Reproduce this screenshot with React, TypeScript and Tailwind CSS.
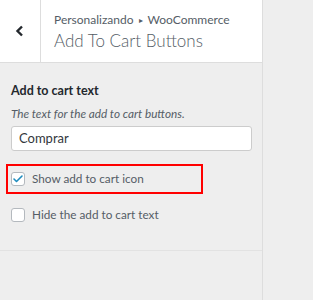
import { Check } from 'lucide-react';

export default function App() {
  return (
    <div className="flex w-[313px] h-[300px] bg-[#eeeeee] font-['Lato',sans-serif] text-[#555d66] overflow-hidden">
      <div className="w-[263px] shrink-0 flex flex-col border-r border-[#dddddd]">
        <div className="flex h-[63px] bg-white border-b border-[#dddddd]">
          <button className="w-[41px] shrink-0 flex items-center justify-center border-r border-[#dddddd] text-[#23282d]">
            <svg width="10" height="12" viewBox="0 0 10 12">
              <path d="M7 1.5 L2.5 6 L7 10.5" fill="none" stroke="currentColor" strokeWidth="2.4" />
            </svg>
          </button>
          <div className="flex flex-col justify-center pl-[13px] pt-[4px]">
            <div className="text-[12px] leading-[16px] text-[#555d66]">
              Personalizando <span className="text-[8px] align-[1px] mx-[2px]">▸</span> WooCommerce
            </div>
            <div className="text-[17px] leading-[26px] font-light text-[#555d66]">Add To Cart Buttons</div>
          </div>
        </div>

        <div className="flex flex-col px-[11px] pt-[19px] border-b border-[#e2e2e2] h-[188px]">
          <div className="text-[12.5px] font-bold text-[#23282d] leading-[18px]">Add to cart text</div>
          <div className="text-[11.75px] italic text-[#555d66] leading-[18px] mt-[5px]">The text for the add to cart buttons.</div>
          <div className="mt-[3px] h-[25px] w-[241px] bg-white border border-[#cccccc] rounded-[3px] flex items-center px-[7px] text-[13px] text-[#32373c]">
            Comprar
          </div>
          <div className="mt-[13px] ml-[-5px] w-[197px] h-[30px] border-2 border-[#ff0000] flex items-center pl-[3px]">
            <div className="w-[14px] h-[14px] bg-white border border-[#b4b9be] rounded-[3px] flex items-center justify-center">
              <Check size={12} strokeWidth={3.2} className="text-[#1e8cbe]" />
            </div>
            <span className="ml-[7px] text-[11.75px] text-[#555d66]">Show add to cart icon</span>
          </div>
          <div className="mt-[12px] flex items-center">
            <div className="w-[14px] h-[14px] bg-white border border-[#b4b9be] rounded-[3px]" />
            <span className="ml-[7px] text-[11.75px] text-[#555d66]">Hide the add to cart text</span>
          </div>
        </div>
        <div className="flex-1" />
      </div>
      <div className="flex-1" />
    </div>
  );
}
